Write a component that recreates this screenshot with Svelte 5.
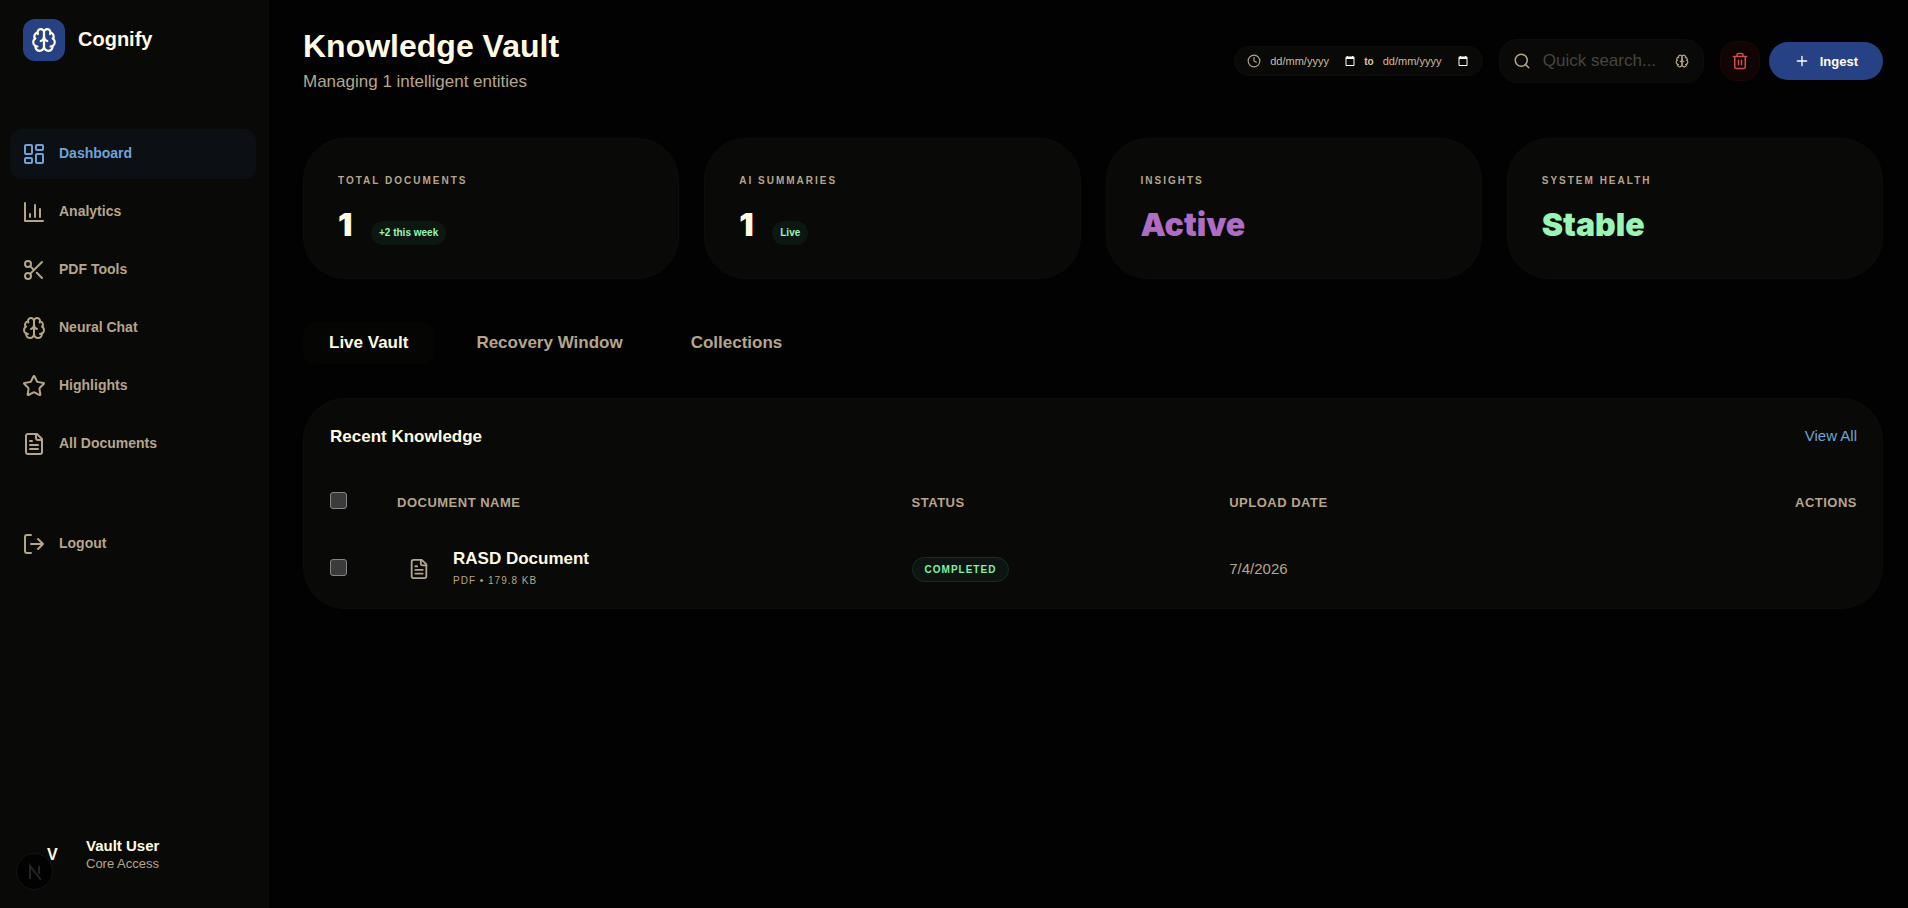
<script>
  const icons = {
    dashboard:
      '<rect x="3" y="3" width="7" height="9" rx="1"/><rect x="14" y="3" width="7" height="5" rx="1"/><rect x="14" y="12" width="7" height="9" rx="1"/><rect x="3" y="16" width="7" height="5" rx="1"/>',
    chart: '<path d="M3 3v18h18M18 17V9M13 17V5M8 17v-3"/>',
    scissors:
      '<circle cx="6" cy="6" r="3"/><path d="M8.12 8.12 12 12M20 4 8.12 15.88"/><circle cx="6" cy="18" r="3"/><path d="M14.8 14.8 20 20"/>',
    brain:
      '<path d="M12 5a3 3 0 1 0-5.997.125 4 4 0 0 0-2.526 5.77 4 4 0 0 0 .556 6.588A4 4 0 1 0 12 18Z"/><path d="M12 5a3 3 0 1 1 5.997.125 4 4 0 0 1 2.526 5.77 4 4 0 0 1-.556 6.588A4 4 0 1 1 12 18Z"/><path d="M15 13a4.5 4.5 0 0 1-3-4 4.5 4.5 0 0 1-3 4M17.599 6.5a3 3 0 0 0 .399-1.375M6.003 5.125A3 3 0 0 0 6.401 6.5M3.477 10.896a4 4 0 0 1 .585-.396M19.938 10.5a4 4 0 0 1 .585.396M6 18a4 4 0 0 1-1.967-.516M19.967 17.484A4 4 0 0 1 18 18"/>',
    star: '<path d="M11.525 2.295a.53.53 0 0 1 .95 0l2.31 4.679a2.123 2.123 0 0 0 1.595 1.16l5.166.756a.53.53 0 0 1 .294.904l-3.736 3.638a2.123 2.123 0 0 0-.611 1.878l.882 5.14a.53.53 0 0 1-.771.56l-4.618-2.428a2.122 2.122 0 0 0-1.973 0L6.396 21.01a.53.53 0 0 1-.77-.56l.881-5.139a2.122 2.122 0 0 0-.611-1.879L2.16 9.795a.53.53 0 0 1 .294-.906l5.165-.755a2.122 2.122 0 0 0 1.597-1.16z"/>',
    file: '<path d="M15 2H6a2 2 0 0 0-2 2v16a2 2 0 0 0 2 2h12a2 2 0 0 0 2-2V7Z"/><path d="M14 2v4a2 2 0 0 0 2 2h4M10 9H8M16 13H8M16 17H8"/>',
    logout: '<path d="M9 21H5a2 2 0 0 1-2-2V5a2 2 0 0 1 2-2h4M16 17l5-5-5-5M21 12H9"/>',
    clock: '<circle cx="12" cy="12" r="10"/><path d="M12 6v6l4 2"/>',
    search: '<circle cx="11" cy="11" r="8"/><path d="m21 21-4.3-4.3"/>',
    trash:
      '<path d="M3 6h18M19 6v14a2 2 0 0 1-2 2H7a2 2 0 0 1-2-2V6M8 6V4a2 2 0 0 1 2-2h4a2 2 0 0 1 2 2v2M10 11v6M14 11v6"/>',
    plus: '<path d="M5 12h14M12 5v14"/>'
  };

  const nav = [
    { label: "Dashboard", icon: "dashboard" },
    { label: "Analytics", icon: "chart" },
    { label: "PDF Tools", icon: "scissors" },
    { label: "Neural Chat", icon: "brain" },
    { label: "Highlights", icon: "star" },
    { label: "All Documents", icon: "file" }
  ];

  const stats = [
    { label: "Total Documents", value: "1", badge: "+2 this week" },
    { label: "AI Summaries", value: "1", badge: "Live" },
    { label: "Insights", value: "Active", tone: "purple" },
    { label: "System Health", value: "Stable", tone: "green" }
  ];

  const tabs = ["Live Vault", "Recovery Window", "Collections"];

  let documents = $state([
    {
      name: "RASD Document",
      meta: "PDF • 179.8 KB",
      status: "Completed",
      date: "7/4/2026",
      selected: false
    }
  ]);

  let activeNav = $state("Dashboard");
  let activeTab = $state("Live Vault");
  let query = $state("");
  let from = $state("");
  let to = $state("");

  let allSelected = $derived(documents.every(d => d.selected));

  function toggleAll(event) {
    const checked = event.currentTarget.checked;
    documents.forEach(d => (d.selected = checked));
  }
</script>

{#snippet icon(name, size)}
  <svg
    class="icon"
    width={size}
    height={size}
    viewBox="0 0 24 24"
    fill="none"
    stroke="currentColor"
    stroke-width="2"
    stroke-linecap="round"
    stroke-linejoin="round"
    aria-hidden="true">{@html icons[name]}</svg>
{/snippet}

{#snippet picker(label)}
  <button class="picker" aria-label={label}>
    <svg width="10" height="10" viewBox="0 0 10 10" aria-hidden="true">
      <path d="M1 1h8v8.5H1z" fill="none" stroke="#fff" />
      <path d="M1 1h8v2H1zM2 0h1v1H2zM7 0h1v1H7z" fill="#fff" />
    </svg>
  </button>
{/snippet}

<div class="app">
  <aside class="sidebar">
    <div class="brand">
      <span class="logo">{@render icon("brain", 26)}</span>
      <span class="brand-name">Cognify</span>
    </div>

    <nav>
      {#each nav as item}
        <a
          href="#{item.icon}"
          class="nav-item"
          class:active={activeNav === item.label}
          onclick={() => (activeNav = item.label)}>
          {@render icon(item.icon, 24)}
          <span>{item.label}</span>
        </a>
      {/each}
    </nav>

    <button class="nav-item logout">
      {@render icon("logout", 24)}
      <span>Logout</span>
    </button>

    <div class="profile">
      <span class="avatar">V</span>
      <div>
        <div class="user">Vault User</div>
        <div class="role">Core Access</div>
      </div>
    </div>
  </aside>

  <main>
    <header>
      <div class="heading">
        <h1>Knowledge Vault</h1>
        <p>Managing 1 intelligent entities</p>
      </div>

      <div class="tools">
        <div class="dates">
          {@render icon("clock", 14)}
          <input type="text" placeholder="dd/mm/yyyy" aria-label="From date" bind:value={from} />
          {@render picker("Pick from date")}
          <span class="to">to</span>
          <input type="text" placeholder="dd/mm/yyyy" aria-label="To date" bind:value={to} />
          {@render picker("Pick to date")}
        </div>

        <label class="search">
          {@render icon("search", 18)}
          <input type="text" placeholder="Quick search..." aria-label="Quick search" bind:value={query} />
          {@render icon("brain", 14)}
        </label>

        <div class="actions">
          <button class="trash" aria-label="Delete selected">{@render icon("trash", 18)}</button>
          <button class="ingest">{@render icon("plus", 16)}<span>Ingest</span></button>
        </div>
      </div>
    </header>

    <section class="stats">
      {#each stats as stat}
        <div class="card">
          <div class="card-label">{stat.label}</div>
          <div class="card-row">
            <span class="value {stat.tone ?? ''}">{stat.value}</span>
            {#if stat.badge}
              <span class="badge">{stat.badge}</span>
            {/if}
          </div>
        </div>
      {/each}
    </section>

    <div class="tabs">
      {#each tabs as tab}
        <button class="tab" class:active={activeTab === tab} onclick={() => (activeTab = tab)}>
          {tab}
        </button>
      {/each}
    </div>

    <section class="panel">
      <div class="panel-head">
        <h2>Recent Knowledge</h2>
        <a href="#all">View All</a>
      </div>

      <table>
        <thead>
          <tr>
            <th class="check">
              <input type="checkbox" aria-label="Select all" checked={allSelected} onchange={toggleAll} />
            </th>
            <th class="name">Document Name</th>
            <th class="status">Status</th>
            <th class="date">Upload Date</th>
            <th class="act">Actions</th>
          </tr>
        </thead>
        <tbody>
          {#each documents as doc}
            <tr>
              <td>
                <input type="checkbox" aria-label="Select {doc.name}" bind:checked={doc.selected} />
              </td>
              <td>
                <div class="doc">
                  <span class="doc-icon">{@render icon("file", 22)}</span>
                  <div>
                    <div class="doc-name">{doc.name}</div>
                    <div class="doc-meta">{doc.meta}</div>
                  </div>
                </div>
              </td>
              <td><span class="pill">{doc.status}</span></td>
              <td class="doc-date">{doc.date}</td>
              <td></td>
            </tr>
          {/each}
        </tbody>
      </table>
    </section>
  </main>

  <button class="devtools" aria-label="Developer tools">
    <svg width="20" height="20" viewBox="0 0 20 20" fill="none" stroke="#242423" stroke-width="2" aria-hidden="true">
      <path d="M5 17V4l11 14" />
      <path d="M14 4v8" />
    </svg>
  </button>
</div>

<style>
  :global(body) {
    background: #020202;
    color: #fffbe2;
    font-family: "Liberation Sans", Arial, sans-serif;
  }

  .app {
    display: flex;
    min-height: 100vh;
    --muted: #b5a58c;
    --surface: #090907;
    --line: #0d0d0b;
    --blue: #264284;
    --green: #98f5b5;
  }

  .app :global(*) {
    box-sizing: border-box;
  }

  button,
  input {
    font-family: inherit;
    border: 0;
    background: none;
    padding: 0;
    color: inherit;
  }

  button {
    cursor: pointer;
  }

  a {
    text-decoration: none;
  }

  .icon {
    flex: none;
    display: block;
  }

  .sidebar {
    width: 269px;
    flex: none;
    display: flex;
    flex-direction: column;
    padding: 19px 13px 35px 10px;
    background: var(--surface);
  }

  .brand {
    display: flex;
    align-items: center;
    gap: 13px;
    padding-left: 13px;
    margin-bottom: 68px;
  }

  .logo {
    display: grid;
    place-items: center;
    width: 42px;
    height: 42px;
    border-radius: 12px;
    background: var(--blue);
  }

  .brand-name {
    font-size: 20px;
    font-weight: 700;
    line-height: 24px;
    padding-bottom: 2px;
  }

  nav {
    display: flex;
    flex-direction: column;
    gap: 8px;
  }

  .nav-item {
    display: flex;
    align-items: center;
    gap: 13px;
    height: 50px;
    padding: 0 12px;
    border-radius: 12px;
    color: var(--muted);
    font-size: 14px;
    font-weight: 700;
  }

  .nav-item span {
    padding-bottom: 2px;
  }

  .nav-item.active {
    background: #0c0f13;
    color: #6fa3d8;
  }

  .logout {
    margin-top: 50px;
  }

  .profile {
    display: flex;
    align-items: center;
    margin-top: auto;
    padding-left: 20px;
  }

  .avatar {
    width: 44px;
    padding-left: 17px;
    font-size: 16px;
    font-weight: 700;
    margin-right: 12px;
  }

  .user {
    font-size: 15px;
    font-weight: 700;
    line-height: 18px;
  }

  .role {
    font-size: 13px;
    line-height: 18px;
    color: var(--muted);
  }

  main {
    flex: 1;
    min-width: 0;
    padding: 28px 25px 28px 34px;
  }

  header {
    display: flex;
    align-items: center;
    justify-content: space-between;
    margin-bottom: 44px;
  }

  h1,
  h2,
  p {
    margin: 0;
  }

  h1 {
    font-size: 32px;
    line-height: 36px;
  }

  .heading p {
    margin: 8px 0 2px;
    font-size: 17px;
    line-height: 20px;
    color: var(--muted);
  }

  .tools {
    display: flex;
    align-items: center;
    gap: 16px;
  }

  .dates {
    display: flex;
    align-items: center;
    height: 30px;
    padding: 0 14px 0 12px;
    border: 1px solid var(--line);
    border-radius: 16px;
    background: var(--surface);
    color: var(--muted);
    font-size: 10px;
  }

  .dates input {
    width: 75px;
    margin-left: 9px;
    font-size: 11px;
  }

  .dates input::placeholder {
    color: #cbbd9e;
    opacity: 1;
  }

  .picker {
    display: block;
    width: 10px;
    height: 12px;
    line-height: 0;
  }

  .to {
    margin-left: 9px;
    font-weight: 700;
    color: #d6c8a8;
  }

  .search {
    display: flex;
    align-items: center;
    height: 44px;
    padding: 0 14px 0 13px;
    border: 1px solid var(--line);
    border-radius: 18px;
    background: var(--surface);
    color: var(--muted);
  }

  .search input {
    width: 120px;
    margin: 0 12px;
    font-size: 17px;
    outline: 0;
  }

  .search input::placeholder {
    color: #46453f;
    opacity: 1;
  }

  .actions {
    display: flex;
    align-items: center;
    gap: 9px;
  }

  .trash {
    display: grid;
    place-items: center;
    width: 40px;
    height: 40px;
    border: 1px solid #1e0707;
    border-radius: 16px;
    background: #100404;
    color: #cc4f4a;
  }

  .ingest {
    display: flex;
    align-items: center;
    gap: 10px;
    height: 38px;
    padding: 0 25px;
    border-radius: 19px;
    background: var(--blue);
    color: #fffdf4;
    font-size: 13px;
    font-weight: 700;
  }

  .stats {
    display: grid;
    grid-template-columns: repeat(4, 1fr);
    gap: 25px;
  }

  .card {
    padding: 36px 34px 33px;
    border: 1px solid var(--line);
    border-radius: 42px;
    background: var(--surface);
  }

  .card-label {
    font-size: 10px;
    font-weight: 700;
    line-height: 12px;
    letter-spacing: 2px;
    text-transform: uppercase;
    color: var(--muted);
  }

  .card-row {
    display: flex;
    align-items: baseline;
    gap: 12px;
    margin-top: 19px;
    line-height: 38px;
  }

  .value {
    min-width: 21px;
    font-family: "Arial Black", Inter, sans-serif;
    font-size: 32px;
    font-weight: 900;
  }

  .value.purple {
    color: #ae6cc5;
  }

  .value.green {
    color: var(--green);
  }

  .badge {
    padding: 6px 8px;
    border-radius: 12px;
    background: #0d1712;
    color: var(--green);
    font-size: 10px;
    font-weight: 700;
    line-height: 12px;
  }

  .tabs {
    display: flex;
    gap: 16px;
    margin: 43px 0 34px;
  }

  .tab {
    height: 42px;
    padding: 0 26px;
    border-radius: 12px;
    font-size: 17px;
    font-weight: 700;
    color: var(--muted);
  }

  .tab.active {
    background: #050504;
    color: #fffbe2;
  }

  .panel {
    padding: 27px 25px 2px 26px;
    border: 1px solid var(--line);
    border-radius: 42px;
    background: var(--surface);
  }

  .panel-head {
    display: flex;
    align-items: flex-start;
    justify-content: space-between;
  }

  h2 {
    font-size: 17px;
    line-height: 22px;
  }

  .panel-head a {
    font-size: 15px;
    line-height: 20px;
    color: #6fa3d8;
  }

  table {
    width: 100%;
    margin-top: 24px;
    border-collapse: collapse;
    table-layout: fixed;
  }

  th {
    height: 60px;
    padding: 0;
    text-align: left;
    font-size: 13px;
    font-weight: 700;
    letter-spacing: 0.5px;
    text-transform: uppercase;
    color: var(--muted);
  }

  td {
    height: 74px;
    padding: 0;
  }

  .check {
    width: 67px;
  }

  .name {
    width: 33.7%;
  }

  .status {
    width: 20.8%;
  }

  .act {
    text-align: right;
  }

  table input {
    appearance: none;
    display: block;
    width: 17px;
    height: 17px;
    margin: 0 0 4px;
    border: 1px solid #858585;
    border-radius: 3px;
    background: #3b3b3b;
  }

  table input:checked {
    background: var(--blue);
  }

  .doc {
    display: flex;
    align-items: center;
    gap: 12px;
  }

  .doc-icon {
    display: grid;
    place-items: center;
    width: 44px;
    height: 44px;
    color: var(--muted);
  }

  .doc-name {
    font-size: 17px;
    font-weight: 700;
    line-height: 22px;
  }

  .doc-meta {
    margin-top: 2px;
    font-size: 10px;
    line-height: 18px;
    letter-spacing: 1px;
    color: var(--muted);
  }

  .pill {
    display: inline-block;
    padding: 5px 12px;
    border: 1px solid #15301f;
    border-radius: 13px;
    background: #0c1511;
    color: #85eda6;
    font-size: 10px;
    font-weight: 700;
    line-height: 13px;
    letter-spacing: 1px;
    text-transform: uppercase;
  }

  .doc-date {
    padding-bottom: 2px;
    font-size: 15px;
    color: var(--muted);
  }

  .devtools {
    position: fixed;
    left: 16px;
    bottom: 18px;
    display: grid;
    place-items: center;
    width: 37px;
    height: 37px;
    border: 1px solid #151514;
    border-radius: 50%;
    background: #020202;
  }
</style>
